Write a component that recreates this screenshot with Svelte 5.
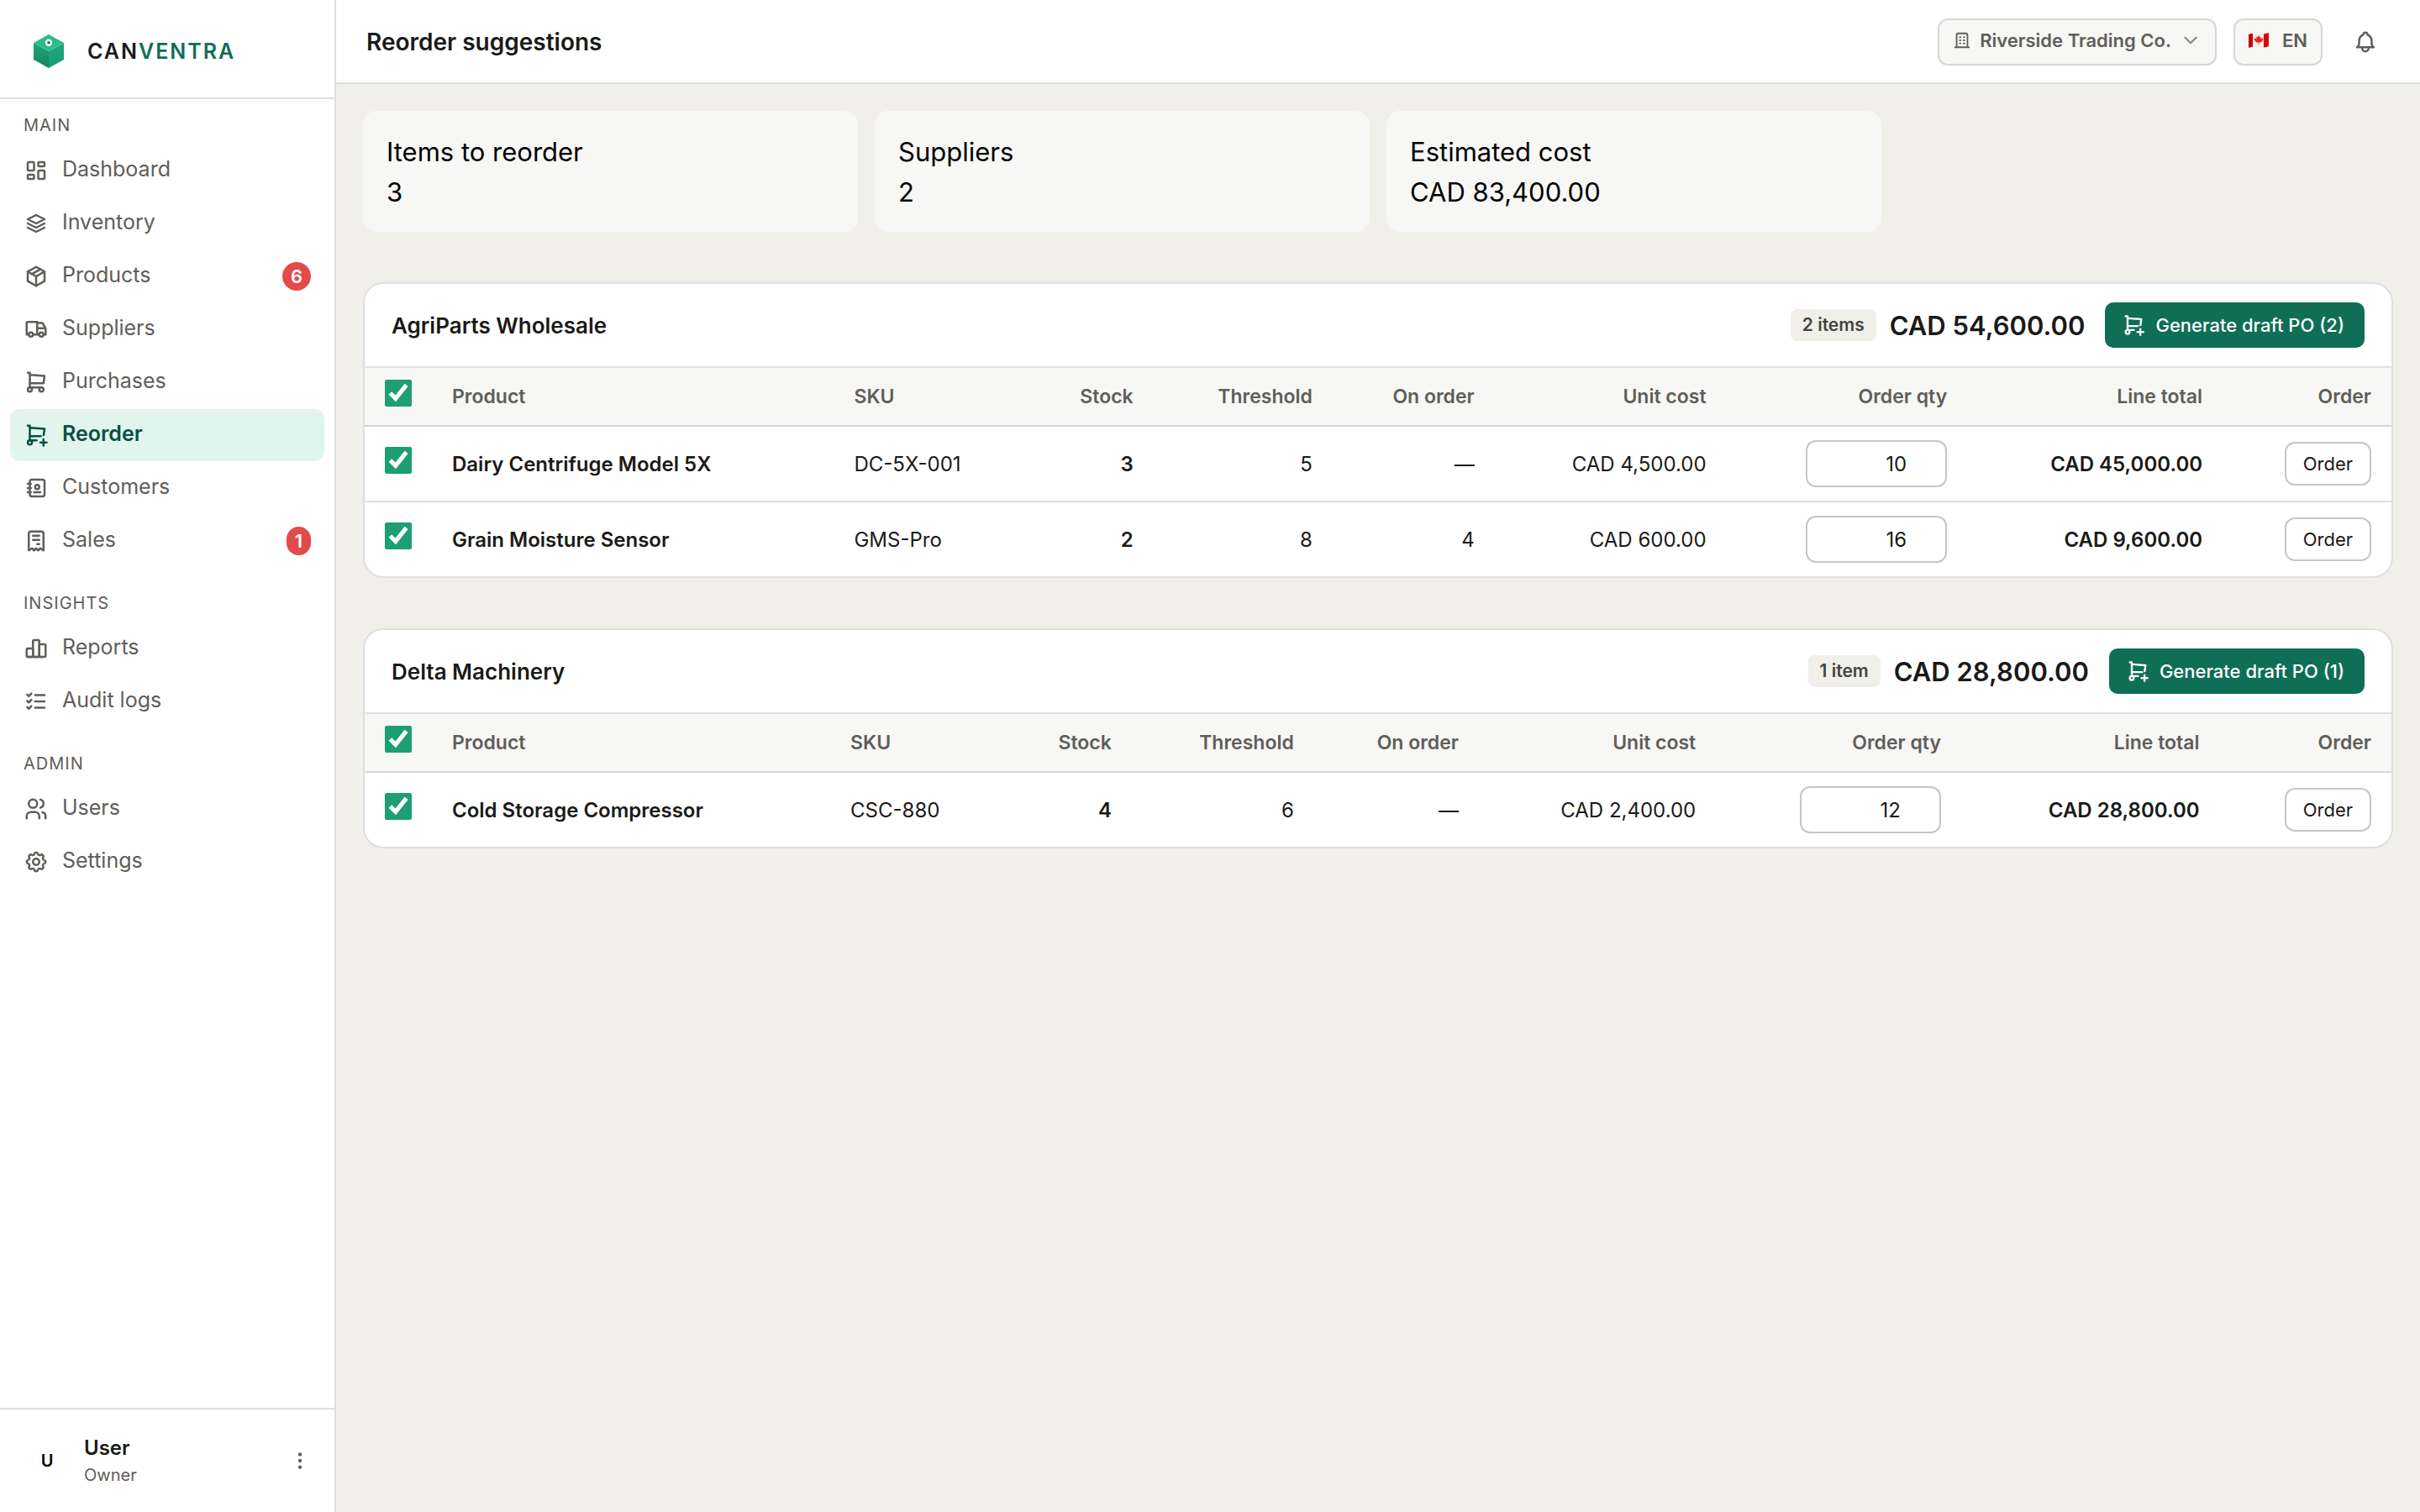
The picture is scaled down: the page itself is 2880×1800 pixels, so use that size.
<script lang="ts">
  type NavItem = { label: string; icon: string; badge?: number };
  type Line = {
    product: string;
    sku: string;
    stock: number;
    threshold: number;
    onOrder: number;
    unitCost: number;
    qty: number;
    selected: boolean;
  };
  type Group = { supplier: string; lines: Line[] };

  const icons: Record<string, string[]> = {
    dashboard: [
      'M5 4h4a1 1 0 0 1 1 1v6a1 1 0 0 1 -1 1h-4a1 1 0 0 1 -1 -1v-6a1 1 0 0 1 1 -1',
      'M5 16h4a1 1 0 0 1 1 1v2a1 1 0 0 1 -1 1h-4a1 1 0 0 1 -1 -1v-2a1 1 0 0 1 1 -1',
      'M15 12h4a1 1 0 0 1 1 1v6a1 1 0 0 1 -1 1h-4a1 1 0 0 1 -1 -1v-6a1 1 0 0 1 1 -1',
      'M15 4h4a1 1 0 0 1 1 1v2a1 1 0 0 1 -1 1h-4a1 1 0 0 1 -1 -1v-2a1 1 0 0 1 1 -1',
    ],
    stack: ['M12 4l-8 4l8 4l8 -4l-8 -4', 'M4 12l8 4l8 -4', 'M4 16l8 4l8 -4'],
    package: ['M12 3l8 4.5l0 9l-8 4.5l-8 -4.5l0 -9l8 -4.5', 'M12 12l8 -4.5', 'M12 12l0 9', 'M12 12l-8 -4.5', 'M16 5.25l-8 4.5'],
    truck: [
      'M5 17a2 2 0 1 0 4 0a2 2 0 1 0 -4 0',
      'M15 17a2 2 0 1 0 4 0a2 2 0 1 0 -4 0',
      'M5 17h-2v-11a1 1 0 0 1 1 -1h9v12m-4 0h6m4 0h2v-6h-8m0 -5h5l3 5',
    ],
    cart: ['M4 19a2 2 0 1 0 4 0a2 2 0 1 0 -4 0', 'M15 19a2 2 0 1 0 4 0a2 2 0 1 0 -4 0', 'M17 17h-11v-14h-2', 'M6 5l14 1l-1 7h-13'],
    cartPlus: ['M4 19a2 2 0 1 0 4 0a2 2 0 1 0 -4 0', 'M12.5 17h-6.5v-14h-2', 'M6 5l14 1l-.86 6.017m-2.64 .983h-10.5', 'M16 19h6', 'M19 16v6'],
    address: [
      'M20 6v12a2 2 0 0 1 -2 2h-10a2 2 0 0 1 -2 -2v-12a2 2 0 0 1 2 -2h10a2 2 0 0 1 2 2z',
      'M10 16h6',
      'M11 11a2 2 0 1 0 4 0a2 2 0 1 0 -4 0',
      'M4 8h3',
      'M4 12h3',
      'M4 16h3',
    ],
    receipt: ['M5 21v-16a2 2 0 0 1 2 -2h10a2 2 0 0 1 2 2v16l-3 -2l-2 2l-2 -2l-2 2l-2 -2l-3 2m4 -14h6m-6 4h6m-2 4h2'],
    chart: [
      'M3 13a1 1 0 0 1 1 -1h4a1 1 0 0 1 1 1v6a1 1 0 0 1 -1 1h-4a1 1 0 0 1 -1 -1z',
      'M15 9a1 1 0 0 1 1 -1h4a1 1 0 0 1 1 1v10a1 1 0 0 1 -1 1h-4a1 1 0 0 1 -1 -1z',
      'M9 5a1 1 0 0 1 1 -1h4a1 1 0 0 1 1 1v14a1 1 0 0 1 -1 1h-4a1 1 0 0 1 -1 -1z',
      'M4 20h14',
    ],
    checks: ['M3.5 5.5l1.5 1.5l2.5 -2.5', 'M3.5 11.5l1.5 1.5l2.5 -2.5', 'M3.5 17.5l1.5 1.5l2.5 -2.5', 'M11 6l9 0', 'M11 12l9 0', 'M11 18l9 0'],
    users: ['M5 7a4 4 0 1 0 8 0a4 4 0 1 0 -8 0', 'M3 21v-2a4 4 0 0 1 4 -4h4a4 4 0 0 1 4 4v2', 'M16 3.13a4 4 0 0 1 0 7.75', 'M21 21v-2a4 4 0 0 0 -3 -3.85'],
    settings: [
      'M10.325 4.317c.426 -1.756 2.924 -1.756 3.35 0a1.724 1.724 0 0 0 2.573 1.066c1.543 -.94 3.31 .826 2.37 2.37a1.724 1.724 0 0 0 1.065 2.572c1.756 .426 1.756 2.924 0 3.35a1.724 1.724 0 0 0 -1.066 2.573c.94 1.543 -.826 3.31 -2.37 2.37a1.724 1.724 0 0 0 -2.572 1.065c-.426 1.756 -2.924 1.756 -3.35 0a1.724 1.724 0 0 0 -2.573 -1.066c-1.543 .94 -3.31 -.826 -2.37 -2.37a1.724 1.724 0 0 0 -1.065 -2.572c-1.756 -.426 -1.756 -2.924 0 -3.35a1.724 1.724 0 0 0 1.066 -2.573c-.94 -1.543 .826 -3.31 2.37 -2.37c1 .608 2.296 .07 2.572 -1.065',
      'M9 12a3 3 0 1 0 6 0a3 3 0 0 0 -6 0',
    ],
    building: ['M3 21h18', 'M9 8h1', 'M9 12h1', 'M9 16h1', 'M14 8h1', 'M14 12h1', 'M14 16h1', 'M5 21v-16a2 2 0 0 1 2 -2h10a2 2 0 0 1 2 2v16'],
    chevron: ['M6 9l6 6l6 -6'],
    bell: ['M10 5a2 2 0 1 1 4 0a7 7 0 0 1 4 6v3a4 4 0 0 0 2 3h-16a4 4 0 0 0 2 -3v-3a7 7 0 0 1 4 -6', 'M9 17v1a3 3 0 0 0 6 0v-1'],
    dots: ['M11 12a1 1 0 1 0 2 0a1 1 0 1 0 -2 0', 'M11 19a1 1 0 1 0 2 0a1 1 0 1 0 -2 0', 'M11 5a1 1 0 1 0 2 0a1 1 0 1 0 -2 0'],
  };

  const sections: { title: string; items: NavItem[] }[] = [
    {
      title: 'Main',
      items: [
        { label: 'Dashboard', icon: 'dashboard' },
        { label: 'Inventory', icon: 'stack' },
        { label: 'Products', icon: 'package', badge: 6 },
        { label: 'Suppliers', icon: 'truck' },
        { label: 'Purchases', icon: 'cart' },
        { label: 'Reorder', icon: 'cartPlus' },
        { label: 'Customers', icon: 'address' },
        { label: 'Sales', icon: 'receipt', badge: 1 },
      ],
    },
    {
      title: 'Insights',
      items: [
        { label: 'Reports', icon: 'chart' },
        { label: 'Audit logs', icon: 'checks' },
      ],
    },
    {
      title: 'Admin',
      items: [
        { label: 'Users', icon: 'users' },
        { label: 'Settings', icon: 'settings' },
      ],
    },
  ];

  let active = $state('Reorder');

  let groups: Group[] = $state([
    {
      supplier: 'AgriParts Wholesale',
      lines: [
        { product: 'Dairy Centrifuge Model 5X', sku: 'DC-5X-001', stock: 3, threshold: 5, onOrder: 0, unitCost: 4500, qty: 10, selected: true },
        { product: 'Grain Moisture Sensor', sku: 'GMS-Pro', stock: 2, threshold: 8, onOrder: 4, unitCost: 600, qty: 16, selected: true },
      ],
    },
    {
      supplier: 'Delta Machinery',
      lines: [
        { product: 'Cold Storage Compressor', sku: 'CSC-880', stock: 4, threshold: 6, onOrder: 0, unitCost: 2400, qty: 12, selected: true },
      ],
    },
  ]);

  const money = (n: number) => 'CAD ' + n.toLocaleString('en-CA', { minimumFractionDigits: 2, maximumFractionDigits: 2 });
  const groupTotal = (g: Group) => g.lines.reduce((sum, l) => sum + l.unitCost * l.qty, 0);
  const selectedCount = (g: Group) => g.lines.filter((l) => l.selected).length;

  let stats = $derived([
    { label: 'Items to reorder', value: String(groups.reduce((n, g) => n + g.lines.length, 0)) },
    { label: 'Suppliers', value: String(groups.length) },
    { label: 'Estimated cost', value: money(groups.reduce((n, g) => n + groupTotal(g), 0)) },
  ]);

  function toggleAll(g: Group) {
    const next = selectedCount(g) < g.lines.length;
    g.lines.forEach((l) => (l.selected = next));
  }
</script>

{#snippet icon(name: string)}
  <svg class="icon {name}" viewBox="0 0 24 24" aria-hidden="true">
    {#each icons[name] as d}
      <path {d} />
    {/each}
  </svg>
{/snippet}

<div class="layout">
  <aside class="sidebar">
    <a class="brand" href="/">
      <svg class="logo" viewBox="0 0 36 42" aria-hidden="true">
        <defs>
          <linearGradient id="cube-left" x1="0" y1="0" x2="0" y2="1">
            <stop offset="0" stop-color="#1fa379" />
            <stop offset="1" stop-color="#15855f" />
          </linearGradient>
          <linearGradient id="cube-right" x1="0" y1="0" x2="0" y2="1">
            <stop offset="0" stop-color="#1fa97d" />
            <stop offset="1" stop-color="#1a9c72" />
          </linearGradient>
        </defs>
        <path d="M18 1L36 11L18 21L0 11Z" fill="#2bbd8b" />
        <path d="M0 11L18 21V41L0 31Z" fill="url(#cube-left)" />
        <path d="M36 11L18 21V41L36 31Z" fill="url(#cube-right)" />
        <path d="M0 11L18 21L36 11" fill="none" stroke="#5dcaa5" stroke-width="0.6" />
        <circle cx="18" cy="10.7" r="4.2" fill="#fff" />
        <circle cx="18" cy="10.7" r="1.8" fill="#0f6e56" />
      </svg>
      <span class="wordmark">CAN<span>VENTRA</span></span>
    </a>

    <nav>
      {#each sections as section}
        <h2>{section.title}</h2>
        <ul>
          {#each section.items as item}
            <li>
              <a
                href="#{item.label}"
                class:active={active === item.label}
                aria-current={active === item.label ? 'page' : undefined}
                onclick={() => (active = item.label)}
              >
                {@render icon(item.icon)}
                <span class="nav-label">{item.label}</span>
                {#if item.badge}
                  <span class="count">{item.badge}</span>
                {/if}
              </a>
            </li>
          {/each}
        </ul>
      {/each}
    </nav>

    <div class="account">
      <span class="avatar">U</span>
      <div class="who">
        <strong>User</strong>
        <span>Owner</span>
      </div>
      <button class="plain" aria-label="Account menu">{@render icon('dots')}</button>
    </div>
  </aside>

  <div class="page">
    <header class="topbar">
      <h1>Reorder suggestions</h1>
      <button class="chip">
        {@render icon('building')}
        <span>Riverside Trading Co.</span>
        {@render icon('chevron')}
      </button>
      <button class="chip lang">
        <svg class="flag" viewBox="0 0 24 20" aria-hidden="true">
          <path d="M0 3Q6 .5 12 2T24 1V17Q18 19.5 12 18T0 19Z" fill="#eee" />
          <path d="M0 3Q2 2 5 1.7V17.8Q2 18 0 19Z" fill="#c00" />
          <path d="M18 2.3Q21 2.2 24 1V17Q21 18.3 18 18.4Z" fill="#d00" />
          <path d="M12 4l1.3 2.4l1.5-.7l-.4 3l2-1.5l1.1 1.8l-2.6 3.2l-2.5.2v2.6h-.8v-2.6l-2.5-.2l-2.6-3.2l1.1-1.8l2 1.5l-.4-3l1.5.7z" fill="#f21b1b" />
        </svg>
        <span>EN</span>
      </button>
      <button class="plain" aria-label="Notifications">{@render icon('bell')}</button>
    </header>

    <main>
      <section class="stats">
        {#each stats as stat}
          <div class="stat">
            <div>{stat.label}</div>
            <div>{stat.value}</div>
          </div>
        {/each}
      </section>

      {#each groups as group}
        <section class="card">
          <div class="card-head">
            <h2>{group.supplier}</h2>
            <span class="tag">{group.lines.length} {group.lines.length === 1 ? 'item' : 'items'}</span>
            <strong class="total">{money(groupTotal(group))}</strong>
            <button class="primary">
              {@render icon('cartPlus')}
              <span>Generate draft PO ({selectedCount(group)})</span>
            </button>
          </div>
          <table>
            <thead>
              <tr>
                <th class="check">
                  <input
                    type="checkbox"
                    aria-label="Select all from {group.supplier}"
                    checked={selectedCount(group) === group.lines.length}
                    onchange={() => toggleAll(group)}
                  />
                </th>
                <th>Product</th>
                <th>SKU</th>
                <th class="num">Stock</th>
                <th class="num">Threshold</th>
                <th class="num">On order</th>
                <th class="num">Unit cost</th>
                <th class="num">Order qty</th>
                <th class="num">Line total</th>
                <th class="num">Order</th>
              </tr>
            </thead>
            <tbody>
              {#each group.lines as line}
                <tr>
                  <td class="check"><input type="checkbox" aria-label="Select {line.product}" bind:checked={line.selected} /></td>
                  <td class="product strong">{line.product}</td>
                  <td>{line.sku}</td>
                  <td class="num strong">{line.stock}</td>
                  <td class="num">{line.threshold}</td>
                  <td class="num">{line.onOrder || '—'}</td>
                  <td class="num">{money(line.unitCost)}</td>
                  <td class="num"><input class="qty" type="number" min="0" aria-label="Order quantity for {line.product}" bind:value={line.qty} /></td>
                  <td class="num strong">{money(line.unitCost * line.qty)}</td>
                  <td class="num"><button class="order">Order</button></td>
                </tr>
              {/each}
            </tbody>
          </table>
        </section>
      {/each}
    </main>
  </div>
</div>

<style>
  :global(body) {
    background: #f0efea;
  }

  .layout {
    display: flex;
    min-height: 100vh;
    font-family: Inter, 'Liberation Sans', sans-serif;
    font-size: 24px;
    color: #1a1a18;
    background: #f0efea;
  }

  h1,
  h2,
  ul {
    margin: 0;
    padding: 0;
  }

  a {
    color: inherit;
    text-decoration: none;
  }

  button,
  input {
    font: inherit;
    color: inherit;
    margin: 0;
  }

  button {
    cursor: pointer;
  }

  .icon {
    flex: none;
    width: 30px;
    height: 30px;
    fill: none;
    stroke: currentColor;
    stroke-width: 2;
    stroke-linecap: round;
    stroke-linejoin: round;
  }

  .sidebar {
    flex: none;
    display: flex;
    flex-direction: column;
    box-sizing: border-box;
    width: 400px;
    background: #fff;
    border-right: 2px solid #dfdfdd;
  }

  .brand {
    display: flex;
    align-items: center;
    gap: 28px;
    box-sizing: border-box;
    height: 118px;
    padding: 6px 40px 0;
    border-bottom: 2px solid #dfdfdd;
  }

  .logo {
    width: 36px;
    height: 42px;
  }

  .wordmark {
    font-size: 25px;
    font-weight: 600;
    letter-spacing: 2px;
  }

  .wordmark span {
    color: #0f6e56;
  }

  nav {
    flex: 1;
    padding: 18px 12px 0;
  }

  nav h2 {
    padding: 0 16px;
    font-size: 20px;
    font-weight: 400;
    line-height: 26px;
    letter-spacing: 1px;
    text-transform: uppercase;
    color: #5f5e5a;
  }

  nav ul {
    display: flex;
    flex-direction: column;
    gap: 1px;
    margin: 10px 0 30px;
    list-style: none;
  }

  nav a {
    display: flex;
    align-items: center;
    gap: 16px;
    height: 62px;
    padding: 0 16px;
    border-radius: 12px;
    font-size: 25px;
    color: #5f5e5a;
  }

  nav a.active {
    background: #e1f5ee;
    color: #085041;
    font-weight: 600;
  }

  .nav-label {
    flex: 1;
    padding-bottom: 5px;
  }

  .count {
    padding: 0 10px;
    border-radius: 17px;
    background: #e24b4a;
    color: #fff;
    font-size: 22px;
    font-weight: 600;
    line-height: 34px;
  }

  .account {
    display: flex;
    align-items: center;
    height: 122px;
    padding: 0 28px;
    border-top: 2px solid #dfdfdd;
  }

  .avatar {
    width: 56px;
    text-align: center;
    font-size: 20px;
    font-weight: 600;
    color: #000;
  }

  .who {
    flex: 1;
    display: flex;
    flex-direction: column;
    padding: 2px 0 0 16px;
    line-height: 33px;
  }

  .who span {
    font-size: 20px;
    color: #5f5e5a;
  }

  .plain {
    display: flex;
    padding: 0;
    border: 0;
    background: none;
    color: #5f5e5a;
  }

  .icon.dots {
    width: 26px;
    height: 26px;
  }

  .page {
    flex: 1;
    min-width: 0;
  }

  .topbar {
    display: flex;
    align-items: center;
    gap: 20px;
    box-sizing: border-box;
    height: 100px;
    padding: 2px 50px 0 36px;
    background: #fff;
    border-bottom: 2px solid #dfdfdd;
  }

  h1 {
    flex: 1;
    font-size: 28px;
    font-weight: 600;
  }

  .chip {
    display: flex;
    align-items: center;
    gap: 10px;
    box-sizing: border-box;
    height: 56px;
    padding: 0 16px 4px;
    border: 2px solid #d6d6d4;
    border-radius: 12px;
    background: #f7f7f5;
    color: #5f5e5a;
    font-size: 22px;
    font-weight: 600;
  }

  .chip.lang {
    gap: 16px;
  }

  .chip .building {
    width: 22px;
    height: 22px;
  }

  .chip .chevron {
    width: 26px;
    height: 26px;
    color: #888780;
  }

  .flag {
    width: 24px;
    height: 20px;
  }

  .topbar .plain {
    padding-left: 16px;
  }

  main {
    display: flex;
    flex-direction: column;
    gap: 60px;
    padding: 32px;
  }

  .stats {
    display: grid;
    grid-template-columns: repeat(4, 1fr);
    gap: 20px;
  }

  .stat {
    padding: 25px 28px 23px;
    border-radius: 16px;
    background: #f7f7f5;
    color: #000;
    font-size: 31px;
    line-height: 48px;
  }

  .card {
    overflow: hidden;
    background: #fff;
    border: 2px solid #dfdfdd;
    border-radius: 24px;
  }

  .card-head {
    display: flex;
    align-items: center;
    height: 98px;
    padding: 0 32px;
    border-bottom: 2px solid #dfdfdd;
  }

  .card-head h2 {
    flex: 1;
    font-size: 26px;
    font-weight: 600;
  }

  .tag {
    padding: 0 14px;
    border-radius: 8px;
    background: #f0efea;
    color: #444441;
    font-size: 21px;
    font-weight: 600;
    line-height: 38px;
  }

  .total {
    margin: 0 24px 0 16px;
    font-size: 31px;
    font-weight: 600;
  }

  .primary {
    display: flex;
    align-items: center;
    gap: 12px;
    height: 54px;
    padding: 0 24px 0 20px;
    border: 0;
    border-radius: 10px;
    background: #0f6e56;
    color: #fff;
    font-size: 22px;
    font-weight: 500;
  }

  .primary .icon {
    width: 28px;
    height: 28px;
  }

  table {
    width: 100%;
    border-collapse: separate;
    border-spacing: 0;
  }

  th {
    padding: 14px 24px;
    border-bottom: 2px solid #d6d6d4;
    background: #f7f7f5;
    color: #5f5e5a;
    font-size: 23px;
    font-weight: 600;
    text-align: left;
  }

  td {
    padding: 16px 24px;
    border-bottom: 2px solid #dfdfdd;
  }

  tbody tr:last-child td {
    border-bottom: 0;
  }

  .product {
    padding-right: 28px;
  }

  .num {
    text-align: right;
  }

  .strong,
  .who strong {
    font-weight: 600;
  }

  .check {
    width: 32px;
  }

  input[type='checkbox'] {
    display: block;
    width: 32px;
    height: 32px;
    margin-bottom: 8px;
    accent-color: #1d9e75;
  }

  td.check {
    padding-top: 0;
    padding-bottom: 0;
  }

  .qty {
    display: block;
    box-sizing: border-box;
    width: 168px;
    height: 56px;
    margin-left: auto;
    padding: 0 46px 0 16px;
    border: 2px solid #c6c6c4;
    border-radius: 12px;
    background: #fff;
    text-align: right;
    appearance: textfield;
  }

  .qty::-webkit-inner-spin-button {
    appearance: none;
    margin: 0;
  }

  .order {
    box-sizing: border-box;
    height: 52px;
    padding: 0 20px;
    border: 2px solid #c6c6c4;
    border-radius: 12px;
    background: #fff;
    font-size: 22px;
  }
</style>
